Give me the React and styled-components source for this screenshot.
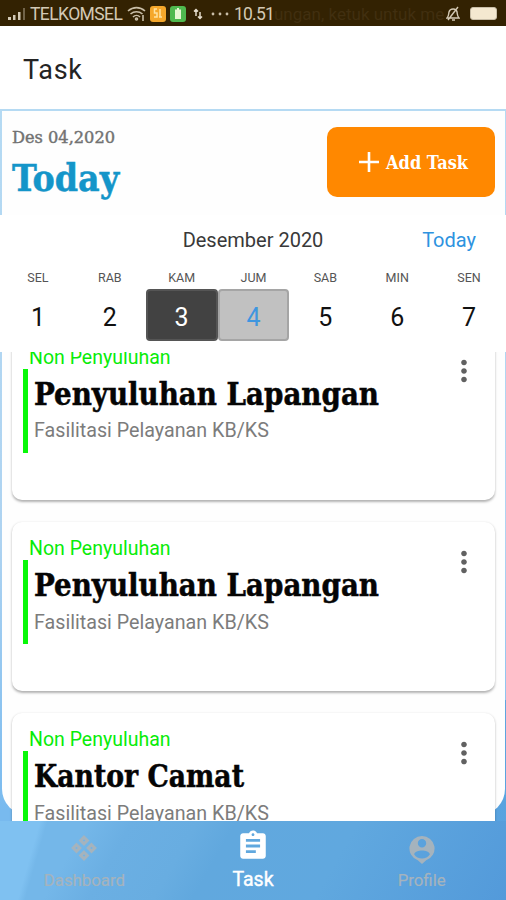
import { useState } from "react";
import styled, { createGlobalStyle } from "styled-components";
import { MdAssignment, MdMoreVert } from "react-icons/md";

const DAYS = [
  { name: "SEL", date: 1 },
  { name: "RAB", date: 2 },
  { name: "KAM", date: 3 },
  { name: "JUM", date: 4 },
  { name: "SAB", date: 5 },
  { name: "MIN", date: 6 },
  { name: "SEN", date: 7 },
];

const TASKS = [
  { id: 1, type: "Non Penyuluhan", title: "Penyuluhan Lapangan", detail: "Fasilitasi Pelayanan KB/KS", width: 345 },
  { id: 2, type: "Non Penyuluhan", title: "Penyuluhan Lapangan", detail: "Fasilitasi Pelayanan KB/KS", width: 345 },
  { id: 3, type: "Non Penyuluhan", title: "Kantor Camat", detail: "Fasilitasi Pelayanan KB/KS", width: 210 },
];

const DashboardIcon = () => (
  <svg width="26" height="26" viewBox="0 0 26 26" fill="none" stroke="currentColor" strokeWidth="3">
    <path d="M13 2.200l3.300 3.300L13 8.800 9.700 5.500zM13 17.200l3.300 3.300-3.300 3.300-3.300-3.300zM5.500 9.700L8.800 13l-3.300 3.300L2.200 13zM20.500 9.700l3.300 3.300-3.300 3.300-3.300-3.300z" />
  </svg>
);

const ProfileIcon = () => (
  <svg width="26" height="29" viewBox="0 0 26 29" fill="currentColor">
    <path
      fillRule="evenodd"
      d="M13 1a12.500 12.500 0 0 1 4.200 24.300L13 29l-4.200-3.700A12.500 12.500 0 0 1 13 1zm0 3a4.200 4.200 0 1 0 0 8.400A4.200 4.200 0 0 0 13 4zm0 11.500c-3.200 0-7.800 1.300-7.800 4C6.900 22 9.800 23.400 13 23.400s6.100-1.400 7.800-3.900c0-2.700-4.600-4-7.800-4z"
    />
  </svg>
);

const App = () => {
  const [selected, setSelected] = useState(3);
  const [tab, setTab] = useState("Task");

  return (
    <Screen>
      <GlobalStyle />
      <StatusBar>
        <svg width="20" height="15" viewBox="0 0 20 15" fill="#d3c9b5">
          <path d="M1 11h3v3H1zM6 9h2.500v5H6zM11 6h2.500v8H11z" />
          <path d="M16 2h2v12h-2z" opacity=".4" />
        </svg>
        <Carrier>TELKOMSEL</Carrier>
        <WifiIcon width="19" height="16" viewBox="0 0 19 16" fill="none" stroke="#c9bea8" strokeWidth="1.6">
          <path d="M1 5c5-4.500 12-4.500 17 0M3.500 8c3.500-3 8.500-3 12 0M6 11c2-2 5-2 7 0" />
          <circle cx="9.500" cy="13" r="1" />
          <path d="M16 9v6" />
        </WifiIcon>
        <Badge $color="#f5a72b">
          <svg width="10" height="11" viewBox="0 0 10 11" fill="none" stroke="#ffe2a0" strokeWidth="1.500">
            <path d="M4 1H1.500v4H4v4H1M7 1v8M6 9h3" />
          </svg>
        </Badge>
        <Badge $color="#4fb94f">
          <svg width="8" height="11" viewBox="0 0 8 11" fill="#e6f7d3">
            <path d="M3 0h2v1.500h2V11H1V1.500h2z" />
          </svg>
        </Badge>
        <TransferIcon width="10" height="12" viewBox="0 0 10 12" fill="none" stroke="#e5dccb" strokeWidth="1.500">
          <path d="M3 8V1.500M1 3.500l2-2 2 2M7 4v6.500M5 8.500l2 2 2-2" />
        </TransferIcon>
        <svg width="18" height="4" viewBox="0 0 18 4" fill="#c9bea8">
          <circle cx="2" cy="2" r="1.400" />
          <circle cx="9" cy="2" r="1.400" />
          <circle cx="16" cy="2" r="1.400" />
        </svg>
        <Clock>10.51</Clock>
        <Ticker>ungan, ketuk untuk me</Ticker>
        <svg width="14" height="15" viewBox="0 0 14 15" fill="none" stroke="#d3c9b5" strokeWidth="1.400">
          <path d="M1 12h12c-2-2-1.500-4-2-6-.7-4-7-4-8 0-.5 2 0 4-2 6zM2 14L12 1M6 14h3" />
        </svg>
        <Battery />
      </StatusBar>

      <Header>Task</Header>

      <Panel>
        <Summary>
          <div>
            <DateText>
              <Fitted $width={103} $size={17} $stroke={0.4} text="Des 04,2020" />
            </DateText>
            <TodayText>
              <Fitted $width={107} $size={38} $stroke={0.5} text="Today" />
            </TodayText>
          </div>
          <AddButton>
            <svg width="22" height="22" viewBox="0 0 22 22" stroke="#fff" strokeWidth="2.600">
              <path d="M11 1v20M1 11h20" />
            </svg>
            <AddLabel>
              <Fitted $width={82} $size={19} text="Add Task" />
            </AddLabel>
          </AddButton>
        </Summary>

        <Calendar>
          <CalendarHead>
            <span />
            <Month>Desember 2020</Month>
            <TodayLink>Today</TodayLink>
          </CalendarHead>
          <Week>
            {DAYS.map((day) => (
              <Day key={day.date} onClick={() => setSelected(day.date)}>
                <DayName>{day.name}</DayName>
                <DayNumber $selected={day.date === selected} $today={day.date === 4}>
                  {day.date}
                </DayNumber>
              </Day>
            ))}
          </Week>
        </Calendar>

        <TaskList>
          {TASKS.map((task) => (
            <Card key={task.id}>
              <CardBody>
                <TaskType>{task.type}</TaskType>
                <TaskInfo>
                  <TaskTitle>
                    <Fitted $width={task.width} $size={32} $stroke={0.5} text={task.title} />
                  </TaskTitle>
                  <TaskDetail>{task.detail}</TaskDetail>
                </TaskInfo>
              </CardBody>
              <MenuButton>
                <MdMoreVert size={34} />
              </MenuButton>
            </Card>
          ))}
        </TaskList>
      </Panel>

      <BottomNav>
        <NavItem $active={tab === "Dashboard"} onClick={() => setTab("Dashboard")}>
          <NavIcon>
            <DashboardIcon />
          </NavIcon>
          Dashboard
        </NavItem>
        <NavItem $active={tab === "Task"} onClick={() => setTab("Task")}>
          <NavIcon $raised>
            <MdAssignment size={34} />
          </NavIcon>
          Task
        </NavItem>
        <NavItem $active={tab === "Profile"} onClick={() => setTab("Profile")}>
          <NavIcon>
            <ProfileIcon />
          </NavIcon>
          Profile
        </NavItem>
      </BottomNav>
    </Screen>
  );
};

// slab text squeezed to a fixed line width
const Fitted = ({ text, $width, $size, $stroke = 0 }) => (
  <FittedSvg width={$width} height={$size * 1.2} $size={$size} $stroke={$stroke}>
    <text x="0" y={$size * 0.92} textLength={$width} lengthAdjust="spacingAndGlyphs">
      {text}
    </text>
  </FittedSvg>
);

const GlobalStyle = createGlobalStyle`
  * {
    box-sizing: border-box;
  }

  body {
    margin: 0;
    font-family: Roboto, "Liberation Sans", sans-serif;
  }

  button {
    border: none;
    padding: 0;
    background: none;
    font: inherit;
  }

  svg {
    display: block;
    flex-shrink: 0;
  }
`;

const FittedSvg = styled.svg`
  overflow: visible;
  font-family: "DejaVu Serif Condensed", "DejaVu Serif", serif;
  font-size: ${(p) => p.$size * 0.97}px;
  font-weight: inherit;
  fill: currentColor;
  stroke: currentColor;
  stroke-width: ${(p) => p.$stroke}px;
`;

const Screen = styled.div`
  width: 506px;
  height: 900px;
  overflow: hidden;
  display: flex;
  flex-direction: column;
  background: linear-gradient(90deg, transparent 50%, rgba(78, 155, 218, 0.75) 50%) 0 700px no-repeat,
    linear-gradient(180deg, #b5daf3 12%, #aed3f1 60%, #78baef 90%);
`;

const StatusBar = styled.div`
  height: 26px;
  flex-shrink: 0;
  display: flex;
  align-items: center;
  padding: 1px 7px 0 7px;
  background: #332202;
  color: #d3c9b5;
  overflow: hidden;
`;

const Carrier = styled.span`
  width: 94px;
  margin-left: 3px;
  font-size: 17.500px;
  letter-spacing: -0.6px;
`;

const WifiIcon = styled.svg`
  margin-left: 3px;
`;

const Badge = styled.span`
  width: 16px;
  height: 16px;
  margin-left: 4px;
  border-radius: 3px;
  display: flex;
  align-items: center;
  justify-content: center;
  background: ${(p) => p.$color};
`;

const TransferIcon = styled.svg`
  margin: 0 8px 0 7px;
`;

const Clock = styled.span`
  width: 40px;
  margin-left: 5px;
  font-size: 17.500px;
  letter-spacing: -0.8px;
`;

const Ticker = styled.span`
  width: 172px;
  white-space: nowrap;
  font-size: 17px;
  color: #412f10;
`;

const Battery = styled.span`
  width: 27px;
  height: 13px;
  margin-left: 10px;
  flex-shrink: 0;
  border: 1px solid #c9bea8;
  border-radius: 3px;
  background: #f4e8d0;
`;

const Header = styled.header`
  height: 83px;
  flex-shrink: 0;
  display: flex;
  align-items: center;
  padding: 4px 0 0 23px;
  background: #fff;
  color: #242424;
  font-size: 27px;
  letter-spacing: 0.7px;
`;

const Panel = styled.main`
  height: 704px;
  flex-shrink: 0;
  margin: 2px 1px 0 2px;
  border-radius: 0 0 26px 26px;
  background: #fefefe;
`;

const Summary = styled.section`
  height: 104px;
  display: flex;
  justify-content: space-between;
  align-items: flex-start;
  padding: 16px 8px 0 10px;
`;

const DateText = styled.div`
  color: #727272;
`;

const TodayText = styled.div`
  margin-top: 9px;
  color: #1495c9;
  font-weight: 700;
`;

const AddButton = styled.button`
  width: 168px;
  height: 70px;
  margin-right: 2px;
  display: flex;
  align-items: center;
  justify-content: center;
  gap: 6px;
  padding-left: 4px;
  border-radius: 10px;
  background: #ff8800;
  color: #fff;
  font-weight: 700;
`;

const AddLabel = styled.span`
  padding-top: 2px;
`;

const Calendar = styled.section`
  position: relative;
  z-index: 1;
  height: 137px;
  margin: 0 -1px 0 -2px;
  padding: 0 1px 0 2px;
  background: #fff;
`;

const CalendarHead = styled.div`
  display: grid;
  grid-template-columns: 1fr 160px 1fr;
  align-items: center;
  height: 50px;
  padding: 0 29px 0 28px;
  font-size: 20px;
`;

const Month = styled.span`
  color: #393939;
  text-align: center;
`;

const TodayLink = styled.span`
  color: #2e93df;
  text-align: right;
`;

const Week = styled.div`
  display: grid;
  grid-template-columns: repeat(7, 1fr);
`;

const Day = styled.div`
  display: flex;
  flex-direction: column;
  align-items: stretch;
  text-align: center;
  cursor: pointer;
`;

const DayName = styled.span`
  height: 24px;
  padding-top: 5px;
  color: #555;
  font-size: 12.500px;
  line-height: 15px;
`;

const DayNumber = styled.span`
  height: 52px;
  padding-top: 3px;
  border: 2px solid
    ${(p) => (p.$selected ? "#555" : p.$today ? "#a5a5a5" : "transparent")};
  border-radius: 4px;
  background: ${(p) => (p.$selected ? "#424242" : p.$today ? "#c1c1c1" : "none")};
  color: ${(p) => (p.$selected ? "#fff" : p.$today ? "#3e96df" : "#111")};
  font-size: 25px;
  line-height: 47px;
`;

const TaskList = styled.section`
  height: 469px;
  overflow: hidden;
  padding: 0 10px 0 10px;

  & > :first-child {
    margin-top: -21px;
  }
`;

const Card = styled.article`
  height: 169px;
  margin-bottom: 22.200px;
  display: flex;
  justify-content: space-between;
  padding: 15px 14px 0 11px;
  border-radius: 10px;
  background: #fff;
  box-shadow: 0 1.500px 2.500px rgba(0, 0, 0, 0.3);
`;

const CardBody = styled.div`
  display: flex;
  flex-direction: column;
`;

const TaskType = styled.span`
  height: 23px;
  padding-left: 6px;
  color: #08ec08;
  font-size: 19.500px;
  line-height: 23px;
`;

const TaskInfo = styled.div`
  height: 84px;
  padding-left: 6px;
  border-left: 5px solid #08f808;
`;

const TaskTitle = styled.h2`
  margin: 0;
  padding-top: 7px;
  color: #050505;
  font-weight: 700;
`;

const TaskDetail = styled.p`
  margin: 4px 0 0;
  color: #7c7c7c;
  font-size: 19.700px;
  line-height: 25px;
`;

const MenuButton = styled.button`
  height: 34px;
  margin-top: 8px;
  color: #616161;
`;

const BottomNav = styled.nav`
  position: relative;
  height: 79px;
  flex-shrink: 0;
  margin-top: auto;
  display: grid;
  grid-template-columns: repeat(3, 1fr);
  background: linear-gradient(106deg, #7fc1f1 7.600%, transparent 9%),
    linear-gradient(120deg, #74b7e9 16%, #6bafe3 24%, #68ade1 36%, #61a8de 43%, #60a8df 65%, #539ada 100%);
`;

const NavItem = styled.button`
  display: flex;
  flex-direction: column;
  align-items: center;
  justify-content: flex-start;
  color: ${(p) => (p.$active ? "#fff" : "#a5b3bd")};
  font-size: ${(p) => (p.$active ? 19.5 : 16.8)}px;
  -webkit-text-stroke: ${(p) => (p.$active ? 0.4 : 0.2)}px currentColor;
  line-height: 24px;
  cursor: pointer;
`;

const NavIcon = styled.span`
  height: 47px;
  padding-top: ${(p) => (p.$raised ? 8 : 14)}px;
`;

export default App;
